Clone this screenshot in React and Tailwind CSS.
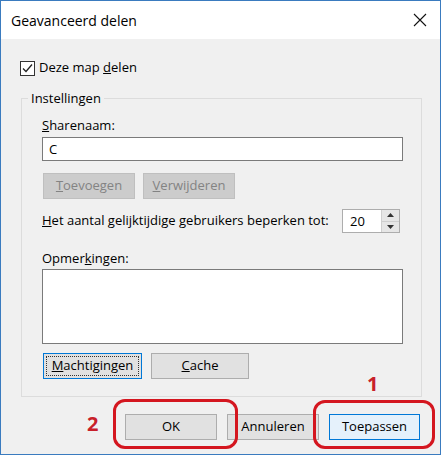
import { useState } from "react";

// dialoog "Geavanceerd delen" (Windows 10 stijl)

function Knop({ children, className = "" }) {
    return (
        <div className={"flex items-center justify-center h-[26px] border text-[13px] " + className}>
            {children}
        </div>
    );
}

export default function App() {
    const [delen, setDelen] = useState(true);
    const [naam, setNaam] = useState("C");

    return (
        <div
            className="relative w-[441px] h-[455px] border border-[#3a7bbf] bg-[#f0f0f0] text-[#000] overflow-hidden"
            style={{ fontFamily: '"Segoe UI", "Open Sans", "Noto Sans", sans-serif' }}
        >
            {/* titelbalk */}
            <div className="flex items-center justify-between h-[38px] bg-white pl-[10px] pr-[14px]">
                <span className="text-[14px] pt-[1px]">Geavanceerd delen</span>
                <svg width="14" height="14" viewBox="0 0 14 14" className="mr-[-1px]">
                    <path d="M1 1 L13 13 M13 1 L1 13" stroke="#111" strokeWidth="1.1" />
                </svg>
            </div>

            {/* checkbox */}
            <label className="flex items-center ml-[19px] mt-[21px] h-[16px] text-[13px]" onClick={() => setDelen(!delen)}>
                <span className="flex items-center justify-center w-[15px] h-[15px] border border-[#333] bg-white">
                    {delen && (
                        <svg width="13" height="13" viewBox="0 0 13 13">
                            <path d="M2 6.5 L5 9.5 L11 2.5" fill="none" stroke="#222" strokeWidth="1.3" />
                        </svg>
                    )}
                </span>
                <span className="ml-[4px]">Deze map <u>d</u>elen</span>
            </label>

            {/* instellingen groep */}
            <fieldset className="mx-[20px] mt-[14px] w-[401px] h-[307px] border border-[#dcdcdc] pl-[20px] pr-[18px]">
                <legend className="ml-[-14px] px-[3px] text-[13px] leading-[16px]">Instellingen</legend>

                <div className="text-[13px] leading-[16px] mt-[11px]"><u>S</u>harenaam:</div>
                <input
                    value={naam}
                    onChange={(e) => setNaam(e.target.value)}
                    className="mt-[4px] w-[361px] h-[24px] border border-[#7a7a7a] bg-white px-[6px] text-[13px] outline-none"
                />

                <div className="flex gap-[8px] mt-[12px] ml-[1px]">
                    <Knop className="w-[92px] bg-[#cccccc] border-[#bfbfbf] text-[#838383]"><span><u>T</u>oevoegen</span></Knop>
                    <Knop className="w-[92px] bg-[#cccccc] border-[#bfbfbf] text-[#838383]"><span><u>V</u>erwijderen</span></Knop>
                </div>

                <div className="flex items-center mt-[10px] h-[24px] text-[13px]">
                    <span className="w-[300px]"><u>H</u>et aantal gelijktijdige gebruikers beperken tot:</span>
                    <div className="flex h-[24px] w-[58px] border border-[#adadad] bg-white">
                        <span className="flex-1 pl-[7px] leading-[22px]">20</span>
                        <div className="flex flex-col w-[18px] border-l border-[#cfcfcf]">
                            <div className="flex-1 flex items-center justify-center bg-[#e6e6e6] border-b border-[#cfcfcf]">
                                <svg width="7" height="4" viewBox="0 0 7 4"><path d="M0 4 L3.5 0 L7 4 Z" fill="#333" /></svg>
                            </div>
                            <div className="flex-1 flex items-center justify-center bg-[#e6e6e6]">
                                <svg width="7" height="4" viewBox="0 0 7 4"><path d="M0 0 L3.5 4 L7 0 Z" fill="#333" /></svg>
                            </div>
                        </div>
                    </div>
                </div>

                <div className="text-[13px] leading-[16px] mt-[17px]">Opmer<u>k</u>ingen:</div>
                <textarea className="mt-[3px] block w-[361px] h-[75px] border border-[#7a7a7a] bg-white resize-none outline-none" />

                <div className="flex gap-[9px] mt-[9px] ml-[1px]">
                    <Knop className="w-[99px] bg-[#e1e1e1] border-[#0078d7] p-[2px]">
                        <span className="flex items-center justify-center w-full h-full border border-dotted border-[#333]">
                            <u>M</u>achtigingen
                        </span>
                    </Knop>
                    <Knop className="w-[98px] bg-[#e1e1e1] border-[#adadad]"><span><u>C</u>ache</span></Knop>
                </div>
            </fieldset>

            {/* onderste knoppen */}
            <div className="flex justify-end gap-[10px] mt-[17px] mr-[20px]">
                <Knop className="w-[92px] bg-[#e1e1e1] border-[#adadad]">OK</Knop>
                <Knop className="w-[92px] bg-[#e1e1e1] border-[#adadad]">Annuleren</Knop>
                <Knop className="w-[91px] bg-[#e5f1fb] border-[#0078d7]">Toepassen</Knop>
            </div>

            {/* rode annotaties */}
            <div className="absolute left-[112px] top-[398px] w-[125px] h-[50px] border-[3px] border-[#d4161f] rounded-[12px]" />
            <div className="absolute left-[312px] top-[399px] w-[122px] h-[49px] border-[3px] border-[#d4161f] rounded-[12px]" />
            <span className="absolute left-[86px] top-[408px] text-[20px] font-bold text-[#c8202a]" style={{ fontFamily: '"Open Sans", sans-serif' }}>2</span>
            <span className="absolute left-[366px] top-[368px] text-[20px] font-bold text-[#c8202a]" style={{ fontFamily: '"Open Sans", sans-serif' }}>1</span>
        </div>
    );
}
